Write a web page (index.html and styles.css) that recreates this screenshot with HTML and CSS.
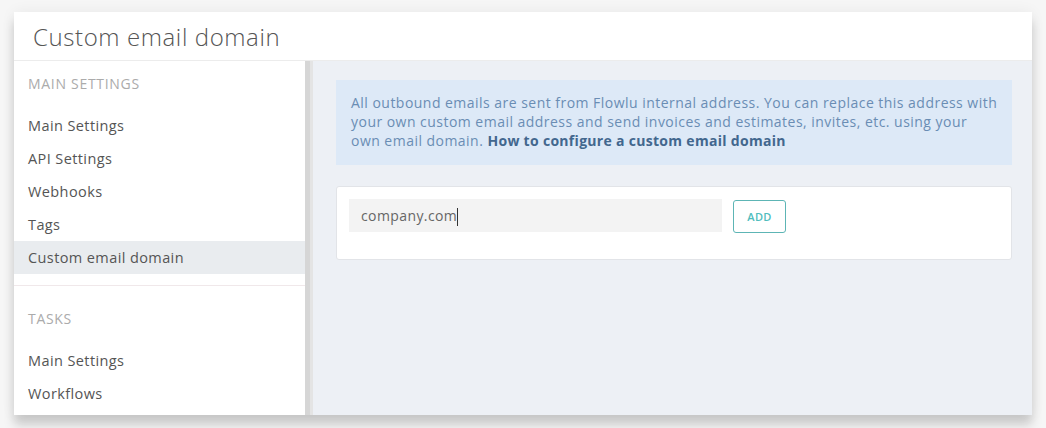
FILE: index.html
```html
<!DOCTYPE html>
<html lang="en">
<head>
  <meta charset="UTF-8" />
  <meta name="viewport" content="width=device-width, initial-scale=1" />
  <title>Custom email domain</title>
  <link rel="stylesheet" href="styles.css">
</head>
<body>
  <div class="window">
    <div class="window-header">
      <h1 class="window-title">Custom email domain</h1>
    </div>
    <div class="window-body">
      <!-- Left settings navigation -->
      <div class="sidebar">
        <div class="nav-group">
          <div class="nav-label">Main Settings</div>
          <a class="nav-item">Main Settings</a>
          <a class="nav-item">API Settings</a>
          <a class="nav-item">Webhooks</a>
          <a class="nav-item">Tags</a>
          <a class="nav-item active">Custom email domain</a>
        </div>
        <div class="nav-group second">
          <div class="nav-label">Tasks</div>
          <a class="nav-item">Main Settings</a>
          <a class="nav-item">Workflows</a>
        </div>
      </div>
      <div class="scrollbar"><div class="scrollbar-thumb"></div></div>

      <!-- Main content -->
      <div class="content">
        <div class="info-box">
          All outbound emails are sent from Flowlu internal address. You can replace this address with<br>
          your own custom email address and send invoices and estimates, invites, etc. using your<br>
          own email domain. <a class="info-link">How to configure a custom email domain</a>
        </div>
        <div class="domain-card">
          <div class="domain-input">company.com<span class="caret"></span></div>
          <button class="add-button">ADD</button>
        </div>
      </div>
    </div>
  </div>
</body>
</html>
```

FILE: styles.css
```css
/* Global Styles */
html, body {
  margin: 0;
  padding: 0;
  height: 100%;
  background-color: #f6f6f6;
  font-family: "Open Sans", Arial, sans-serif;
  overflow: hidden;
}

body {
  padding: 12px 14px 0 14px;
  box-sizing: border-box;
}

.window {
  height: 403px;
  display: flex;
  flex-direction: column;
  background: #ffffff;
  box-shadow: 0 10px 10px rgba(0, 0, 0, 0.17), 0 0 14px rgba(0, 0, 0, 0.06);
}

.window-header {
  height: 48px;
  flex-shrink: 0;
  display: flex;
  align-items: center;
  padding-left: 19px;
  border-bottom: 1px solid #ececec;
}

.window-title {
  margin: 0;
  font-size: 24px;
  font-weight: 300;
  color: #555555;
  letter-spacing: 0.6px;
}

.window-body {
  flex: 1;
  display: flex;
  min-height: 0;
}

/* Sidebar */
.sidebar {
  width: 291px;
  flex-shrink: 0;
  background: #ffffff;
}

.nav-group {
  padding-top: 7px;
}

.nav-group.second {
  margin-top: 11px;
  padding-top: 17px;
  border-top: 1px solid #f0e8ea;
}

.nav-label {
  height: 32px;
  line-height: 32px;
  padding-left: 14px;
  margin-bottom: 9px;
  font-size: 14px;
  letter-spacing: 0.7px;
  color: #ababab;
  text-transform: uppercase;
}

.nav-item {
  display: block;
  height: 33px;
  line-height: 33px;
  padding-left: 14px;
  font-size: 14.5px;
  letter-spacing: 0.4px;
  color: #555555;
  cursor: pointer;
}

.nav-item.active {
  background: #e9ecef;
}

.scrollbar {
  width: 8px;
  flex-shrink: 0;
  background: #e4e4e4;
}

.scrollbar-thumb {
  width: 5px;
  height: 100%;
  background: #d6d6d6;
}

/* Content */
.content {
  flex: 1;
  background: #edf0f5;
  padding: 19px 20px 0 23px;
}

.info-box {
  background: #dde9f7;
  padding: 13px 15px 15px 15px;
  font-size: 14px;
  line-height: 19px;
  letter-spacing: 0.47px;
  white-space: nowrap;
  color: #6a8db4;
}

.info-link {
  font-weight: 700;
  letter-spacing: 0.3px;
  color: #42678e;
  cursor: pointer;
}

.domain-card {
  margin-top: 21px;
  background: #ffffff;
  border: 1px solid #e2e4e8;
  border-radius: 3px;
  padding: 12px;
  box-sizing: border-box;
  height: 74px;
  display: flex;
  align-items: flex-start;
  gap: 11px;
}

.domain-input {
  width: 373px;
  height: 33px;
  line-height: 33px;
  padding-left: 12px;
  box-sizing: border-box;
  background: #f3f3f3;
  font-size: 14px;
  letter-spacing: 0.4px;
  color: #666666;
}

.caret {
  display: inline-block;
  width: 1px;
  height: 18px;
  background: #333333;
  vertical-align: middle;
}

.add-button {
  width: 53px;
  height: 33px;
  margin-top: 1px;
  background: #ffffff;
  border: 1px solid #5db5b5;
  border-radius: 3px;
  font-family: "Open Sans", Arial, sans-serif;
  font-size: 11px;
  font-weight: 600;
  letter-spacing: 0.3px;
  color: #4fbdbd;
  cursor: pointer;
}
```
